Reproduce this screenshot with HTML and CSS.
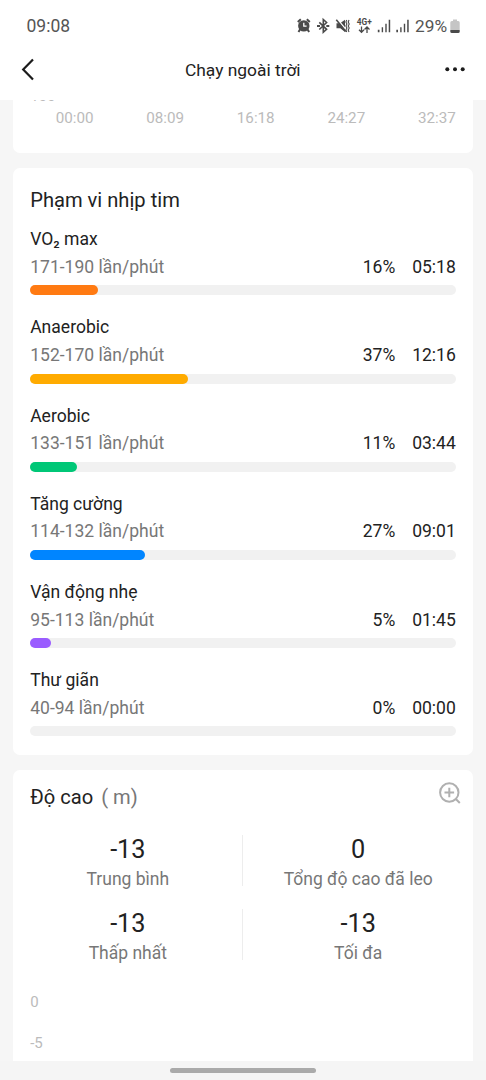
FILE: index.html
```html
<!DOCTYPE html>
<html lang="vi">
<head>
<meta charset="utf-8">
<title>Chạy ngoài trời</title>
<link rel="stylesheet" href="styles.css">
</head>
<body>
<div class="screen">
  <div class="status">
    <span class="clock">09:08</span>
    <svg class="status-icons" width="118" height="20" viewBox="0 0 118 20" fill="none">
      <g stroke="#4a4a4a" fill="#4a4a4a">
        <path d="M.8 6 3.800 3.300M12.800 6 9.800 3.300M3.300 13 1.500 16M10.300 13l1.800 3" stroke-width="2"/>
        <circle cx="6.800" cy="9.900" r="5.700" stroke="none"/>
        <path d="M6.800 6.800v3.400h2.800" stroke="#fff" stroke-width="1.300" fill="none"/>
      </g>
      <path d="m22.300 6.300 7.300 7-3.300 3V3.500l3.300 3-7.300 7" stroke="#4a4a4a" stroke-width="1.600"/>
      <path d="M20 9.900h3M29.300 9.900h3" stroke="#4a4a4a" stroke-width="2"/>
      <path d="M39.500 7.200h3.500l5-3.400v12.200l-4.700-3.700h-3.800z" fill="#4a4a4a"/>
      <path d="m40.300 3 9 11" stroke="#fff" stroke-width="1.400"/>
      <path d="m39.300 3.800 9.500 11.700" stroke="#4a4a4a" stroke-width="1.500"/>
      <path d="m49.700 4-.8 2 1 2-1 2 1 2-1 2 .8 2M52 4l-.8 2 1 2-1 2 1 2-1 2 .8 2" stroke="#4a4a4a" stroke-width="1.100"/>
      <text class="network" x="59.800" y="9.200">4G+</text>
      <path d="M64.500 10.500v6M62 13.800l2.500 2.500 2.500-2.500M70 17v-6M67.500 13.500 70 11l2.500 2.500" stroke="#4a4a4a" stroke-width="1.300"/>
      <g fill="#4a4a4a">
        <path d="M80.800 13.700h1.700v2.500h-1.700zM84.700 11.200h1.400v5h-1.400zM88.300 7.700h1.400v8.500h-1.400zM91.700 3.700h1.500v12.500h-1.500z"/>
        <path d="M99.300 13.700h1.700v2.500h-1.700zM103.200 11.200h1.400v5h-1.400zM106.800 7.700h1.400v8.500h-1.400zM110.200 3.700h1.500v12.500h-1.500z"/>
      </g>
    </svg>
    <span class="percent">29%</span>
    <svg class="battery" width="10" height="15" viewBox="0 0 10 15">
      <path d="M3 .5h4V2h1.200Q9.700 2 9.700 3.600V11H.3V3.600Q.3 2 1.800 2H3z" fill="#c5c5c5"/>
      <path d="M.3 11h9.400v1.500q0 1.500-1.500 1.500H1.800Q.3 14 .3 12.500z" fill="#4a4a4a"/>
    </svg>
  </div>
  <header class="nav">
    <svg width="14" height="24" viewBox="0 0 14 24" fill="none"><path d="M12 1.500 2.200 11.500l9.800 10" stroke="#1c1c1c" stroke-width="2.200"/></svg>
    <h1 class="title">Chạy ngoài trời</h1>
    <svg width="20" height="6" viewBox="0 0 20 6" fill="#1c1c1c"><circle cx="2.300" cy="2.300" r="2"/><circle cx="10" cy="2.300" r="2"/><circle cx="17.700" cy="2.300" r="2"/></svg>
  </header>
  <main class="content">
    <section class="card chart-tail">
      <div class="axis-clip"><span class="axis-value">100</span></div>
      <div class="times"><span>00:00</span><span>08:09</span><span>16:18</span><span>24:27</span><span>32:37</span></div>
    </section>

    <section class="card zones">
      <h2 class="heading">Phạm vi nhịp tim</h2>
      <div class="zone">
        <div class="name">VO₂ max</div>
        <div class="detail"><span class="range">171-190 lần/phút</span><span>16%</span><span class="duration">05:18</span></div>
        <div class="track"><div class="fill orange" style="width:16%"></div></div>
      </div>
      <div class="zone">
        <div class="name">Anaerobic</div>
        <div class="detail"><span class="range">152-170 lần/phút</span><span>37%</span><span class="duration">12:16</span></div>
        <div class="track"><div class="fill amber" style="width:37%"></div></div>
      </div>
      <div class="zone">
        <div class="name">Aerobic</div>
        <div class="detail"><span class="range">133-151 lần/phút</span><span>11%</span><span class="duration">03:44</span></div>
        <div class="track"><div class="fill green" style="width:11%"></div></div>
      </div>
      <div class="zone">
        <div class="name">Tăng cường</div>
        <div class="detail"><span class="range">114-132 lần/phút</span><span>27%</span><span class="duration">09:01</span></div>
        <div class="track"><div class="fill blue" style="width:27%"></div></div>
      </div>
      <div class="zone">
        <div class="name">Vận động nhẹ</div>
        <div class="detail"><span class="range">95-113 lần/phút</span><span>5%</span><span class="duration">01:45</span></div>
        <div class="track"><div class="fill purple" style="width:5%"></div></div>
      </div>
      <div class="zone">
        <div class="name">Thư giãn</div>
        <div class="detail"><span class="range">40-94 lần/phút</span><span>0%</span><span class="duration">00:00</span></div>
        <div class="track"></div>
      </div>
    </section>

    <section class="card altitude">
      <div class="altitude-head">
        <h2 class="heading">Độ cao <span class="unit">( m)</span></h2>
        <svg class="zoom" width="24" height="24" viewBox="0 0 24 24" fill="none" stroke="#b0b0b0" stroke-width="2"><circle cx="11.300" cy="11.500" r="9.200"/><path d="M11.300 6.700v9.600M6.500 11.500h9.600M17.800 18l4 4"/></svg>
      </div>
      <div class="stats">
        <div class="stat"><div class="value">-13</div><div class="label">Trung bình</div></div>
        <div class="stat split"><div class="value">0</div><div class="label">Tổng độ cao đã leo</div></div>
        <div class="stat"><div class="value">-13</div><div class="label">Thấp nhất</div></div>
        <div class="stat split"><div class="value">-13</div><div class="label">Tối đa</div></div>
      </div>
      <div class="y-axis"><span>0</span><span>-5</span></div>
    </section>
  </main>
  <footer class="home"><div class="handle"></div></footer>
</div>
</body>
</html>
```
FILE: styles.css
```css
* { box-sizing: border-box; }
body { margin: 0; background: #f6f6f6; font-family: Roboto, "Noto Sans", sans-serif; color: #222; }
h1, h2 { margin: 0; font-weight: 400; }
svg { display: block; flex: none; }
.screen { width: 486px; height: 1080px; overflow: hidden; display: flex; flex-direction: column; }
.status { flex: none; height: 50px; padding: 2px 26px 0 26.500px; background: #fff; display: flex; align-items: center; color: #555; font-size: 17.500px; }
.clock { flex: 1; }
.network { font: 700 8.300px Roboto, sans-serif; fill: #4a4a4a; }
.percent { width: 34px; font-size: 17.300px; margin-right: 1px; }
.battery { margin-top: 0; }
.nav { flex: none; height: 49.500px; padding: 0 21.500px 10px 21px; background: #fff; display: flex; align-items: center; justify-content: space-between; }
.title { font-size: 17.400px; line-height: 24px; padding-left: 6px; }
.content { flex: 1; min-height: 0; overflow: hidden; padding: 0 12.700px; display: flex; flex-direction: column; gap: 15px; }
.card { flex: none; background: #fff; border-radius: 7px; padding: 0 17.500px; }
.chart-tail { height: 53px; border-radius: 0 0 7px 7px; color: #bbb; font-size: 15.200px; }
.axis-clip { height: 3px; overflow: hidden; display: flex; align-items: flex-end; font-size: 15px; line-height: 15px; }
.axis-value { margin-bottom: -1.500px; }
.times { display: flex; justify-content: space-between; padding-left: 25.500px; margin-top: 5px; line-height: 20px; }
.zones { height: 587.500px; padding-top: 18px; }
.heading { font-size: 20.150px; line-height: 28px; }
.zones .heading { margin-bottom: 12.800px; }
.zone { height: 88.200px; }
.name, .detail { font-size: 17.550px; line-height: 27.600px; height: 27.600px; }
.detail { display: flex; }
.range { flex: 1; color: #777; }
.duration { width: 60.500px; text-align: right; }
.track { height: 10px; margin-top: 4px; border-radius: 5px; background: #f1f1f1; }
.fill { height: 10px; border-radius: 5px; }
.orange { background: #ff7a12; }
.amber { background: #ffab00; }
.green { background: #00c777; }
.blue { background: #0085ff; }
.purple { background: #9a5cff; }
.altitude { height: 310px; padding-top: 11px; }
.altitude-head { display: flex; justify-content: space-between; align-items: flex-start; margin-right: -6px; }
.altitude-head .heading { padding-top: 2px; }
.unit { color: #777; margin-left: 3px; }
.stats { display: grid; grid-template-columns: 1fr 1fr; row-gap: 20px; margin: 24px -17.500px 0; }
.stat { height: 53.500px; text-align: center; }
.split { background: linear-gradient(#ededed, #ededed) left top / 1px 51px no-repeat; margin-left: -1px; padding-left: 1px; }
.value { font-size: 25.300px; line-height: 30px; }
.label { font-size: 17.500px; line-height: 28px; color: #777; }
.y-axis { margin-top: 29.500px; display: flex; flex-direction: column; gap: 21.500px; font-size: 15px; line-height: 20px; color: #bbb; }
.home { flex: none; height: 19px; background: #f5f5f5; display: flex; align-items: center; justify-content: center; }
.handle { width: 146px; height: 5px; border-radius: 3px; background: #aaa; }
```
